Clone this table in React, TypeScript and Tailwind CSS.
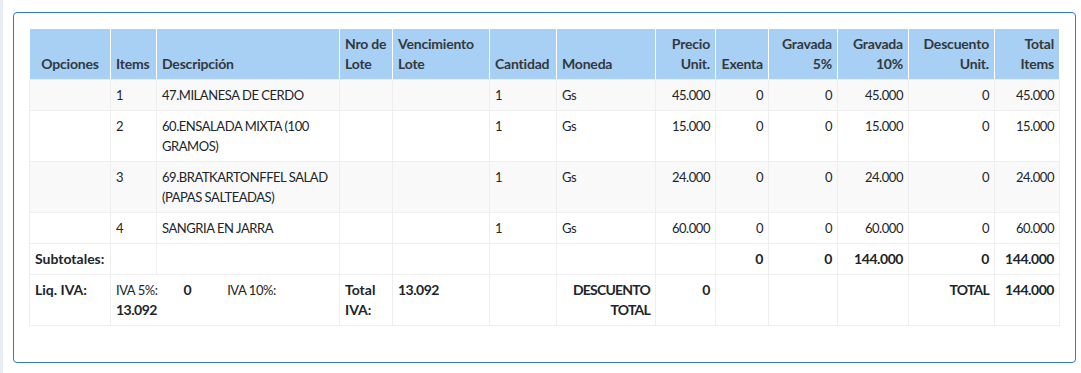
import React from "react";

type Row = {
  item: string;
  desc: string[];
  qty: string;
  price: string;
  g10: string;
  total: string;
};

const ROWS: Row[] = [
  { item: "1", desc: ["47.MILANESA DE CERDO"], qty: "1", price: "45.000", g10: "45.000", total: "45.000" },
  { item: "2", desc: ["60.ENSALADA MIXTA (100", "GRAMOS)"], qty: "1", price: "15.000", g10: "15.000", total: "15.000" },
  { item: "3", desc: ["69.BRATKARTONFFEL SALAD", "(PAPAS SALTEADAS)"], qty: "1", price: "24.000", g10: "24.000", total: "24.000" },
  { item: "4", desc: ["SANGRIA EN JARRA"], qty: "1", price: "60.000", g10: "60.000", total: "60.000" },
];

const WIDTHS = [81, 46, 183, 53, 97, 67, 99, 60, 53, 69, 71, 86, 65];

const th = "border-x border-white px-[5px] py-[5px] align-bottom font-bold whitespace-nowrap tracking-[-0.2px] text-[#33383d]";
const cell = "border border-[#eeeeee] px-[5px] py-[5px] align-top whitespace-nowrap";
// regular body text: narrower than the bold one
const td = `${cell} text-[13px] tracking-[-0.45px]`;
// bold body text
const tb = `${cell} font-bold`;
const tbNum = `${tb} text-right tracking-[-0.45px]`;
const tbCaps = `${tb} text-right tracking-[-0.8px]`;

function Two({ a, b }: { a: string; b: string }) {
  return (
    <>
      {a}
      <br />
      {b}
    </>
  );
}

export default function App() {
  return (
    <div
      className="flex h-[373px] w-[1081px] bg-white text-[14px] leading-[20px] text-[#212529]"
      style={{ fontFamily: "Lato, 'Noto Sans', sans-serif" }}
    >
      <div className="w-[3px] shrink-0 bg-[#e9ecf2]" />
      <div className="pl-[10px] pt-[12px]">
        <div className="h-[351px] w-[1063px] rounded-[4px] border border-[#2f7dc4] px-[15px] pt-[16px]">
          <table className="w-[1030px] table-fixed border-collapse">
            <colgroup>
              {WIDTHS.map((w, i) => (
                <col key={i} style={{ width: w }} />
              ))}
            </colgroup>
            <thead>
              <tr className="bg-[#a8cff4]">
                <th className={`${th} text-center`}>Opciones</th>
                <th className={`${th} text-left`}>Items</th>
                <th className={`${th} text-left`}>Descripción</th>
                <th className={`${th} text-left`}>
                  <Two a="Nro de" b="Lote" />
                </th>
                <th className={`${th} text-left`}>
                  <Two a="Vencimiento" b="Lote" />
                </th>
                <th className={`${th} text-left`}>Cantidad</th>
                <th className={`${th} text-left`}>Moneda</th>
                <th className={`${th} text-right`}>
                  <Two a="Precio" b="Unit." />
                </th>
                <th className={`${th} text-right`}>Exenta</th>
                <th className={`${th} text-right`}>
                  <Two a="Gravada" b="5%" />
                </th>
                <th className={`${th} text-right`}>
                  <Two a="Gravada" b="10%" />
                </th>
                <th className={`${th} text-right`}>
                  <Two a="Descuento" b="Unit." />
                </th>
                <th className={`${th} text-right`}>
                  <Two a="Total" b="Items" />
                </th>
              </tr>
            </thead>
            <tbody>
              {ROWS.map((r, i) => (
                <tr key={r.item} className={i % 2 === 0 ? "bg-[#f9f9f9]" : "bg-white"}>
                  <td className={td}></td>
                  <td className={td}>{r.item}</td>
                  <td className={td}>
                    {r.desc.length > 1 ? <Two a={r.desc[0]} b={r.desc[1]} /> : r.desc[0]}
                  </td>
                  <td className={td}></td>
                  <td className={td}></td>
                  <td className={td}>{r.qty}</td>
                  <td className={td}>Gs</td>
                  <td className={`${td} text-right`}>{r.price}</td>
                  <td className={`${td} text-right`}>0</td>
                  <td className={`${td} text-right`}>0</td>
                  <td className={`${td} text-right`}>{r.g10}</td>
                  <td className={`${td} text-right`}>0</td>
                  <td className={`${td} text-right`}>{r.total}</td>
                </tr>
              ))}
              <tr>
                <td className={tb}>Subtotales:</td>
                <td className={cell}></td>
                <td className={cell}></td>
                <td className={cell}></td>
                <td className={cell}></td>
                <td className={cell}></td>
                <td className={cell}></td>
                <td className={cell}></td>
                <td className={tbNum}>0</td>
                <td className={tbNum}>0</td>
                <td className={tbNum}>144.000</td>
                <td className={tbNum}>0</td>
                <td className={tbNum}>144.000</td>
              </tr>
              <tr>
                <td className={tb}>Liq. IVA:</td>
                <td className={cell} colSpan={2}>
                  <div className="flex text-[13px] tracking-[-0.45px]">
                    <span>IVA 5%:</span>
                    <span className="ml-[26px] text-[14px] font-bold">0</span>
                    <span className="ml-[36px]">IVA 10%:</span>
                  </div>
                  <div className="font-bold tracking-[-0.5px]">13.092</div>
                </td>
                <td className={tb}>
                  <Two a="Total" b="IVA:" />
                </td>
                <td className={`${tb} tracking-[-0.5px]`}>13.092</td>
                <td className={cell}></td>
                <td className={tbCaps}>
                  <Two a="DESCUENTO" b="TOTAL" />
                </td>
                <td className={tbNum}>0</td>
                <td className={cell}></td>
                <td className={cell}></td>
                <td className={cell}></td>
                <td className={tbCaps}>TOTAL</td>
                <td className={tbNum}>144.000</td>
              </tr>
            </tbody>
          </table>
        </div>
      </div>
    </div>
  );
}
